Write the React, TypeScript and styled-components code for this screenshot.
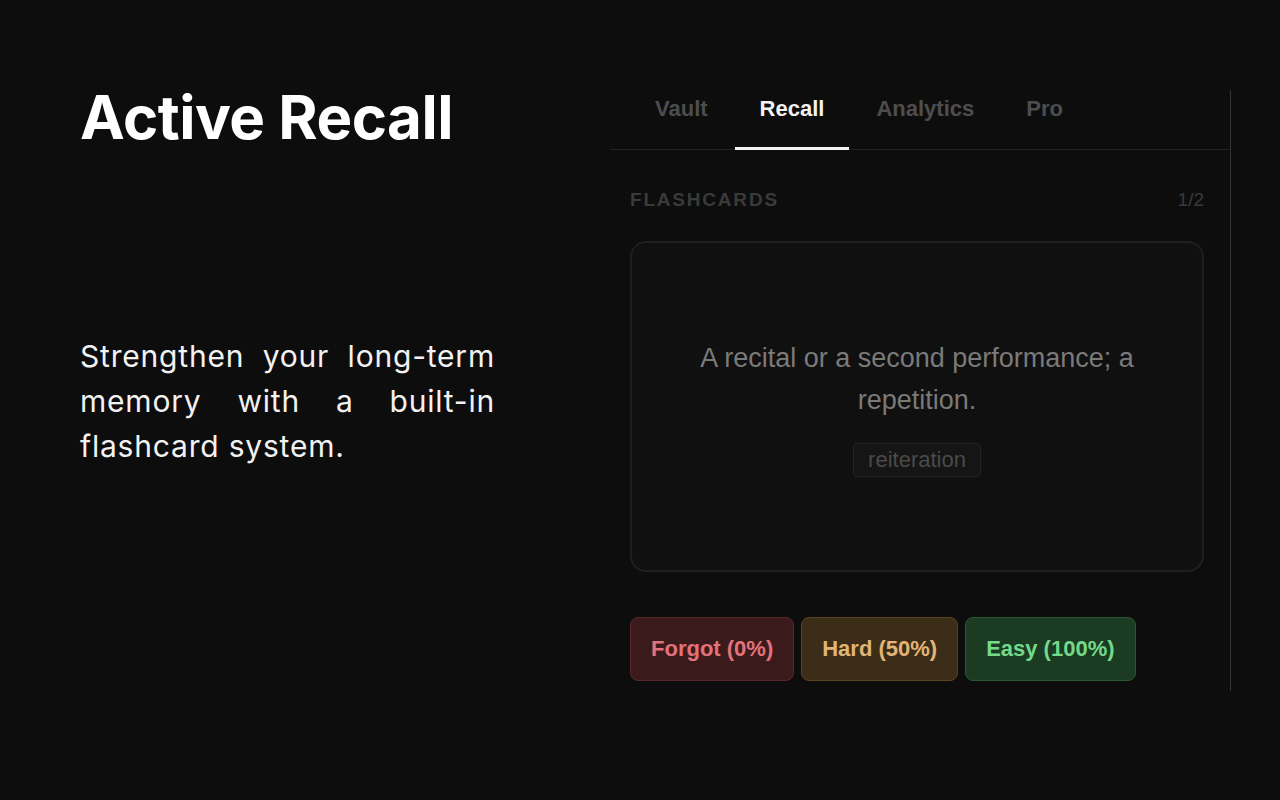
import styled, { createGlobalStyle } from "styled-components";

const GlobalStyle = createGlobalStyle`
  html, body {
    margin: 0;
    padding: 0;
    background: #0d0d0d;
  }
  * {
    box-sizing: border-box;
  }
`;

type Tone = "red" | "amber" | "green";

const tones: Record<Tone, { bg: string; border: string; text: string }> = {
  red: { bg: "#3b1a1c", border: "#55282b", text: "#e2727a" },
  amber: { bg: "#3b2d18", border: "#5a4424", text: "#e2b476" },
  green: { bg: "#1b3b23", border: "#2a5632", text: "#74d98a" },
};

const tabs = ["Vault", "Recall", "Analytics", "Pro"];

const grades: { label: string; tone: Tone }[] = [
  { label: "Forgot (0%)", tone: "red" },
  { label: "Hard (50%)", tone: "amber" },
  { label: "Easy (100%)", tone: "green" },
];

const App = () => {
  return (
    <>
      <GlobalStyle />
      <Page>
        <Intro>
          <Title>Active Recall</Title>
          <Lead>Strengthen your long-term memory with a built-in flashcard system.</Lead>
        </Intro>

        <Panel>
          <TabBar>
            {tabs.map((tab) => (
              <Tab key={tab} active={tab === "Recall"}>
                {tab}
              </Tab>
            ))}
          </TabBar>

          <Body>
            <SectionHeader>
              <SectionTitle>FLASHCARDS</SectionTitle>
              <Counter>1/2</Counter>
            </SectionHeader>

            <Card>
              <Definition>A recital or a second performance; a repetition.</Definition>
              <Answer>reiteration</Answer>
            </Card>

            <Grades>
              {grades.map((g) => (
                <GradeButton key={g.label} tone={g.tone}>
                  {g.label}
                </GradeButton>
              ))}
            </Grades>
          </Body>
        </Panel>
      </Page>
    </>
  );
};

const Page = styled.div`
  width: 1280px;
  height: 800px;
  display: flex;
  flex-direction: row;
  align-items: flex-start;
  padding: 81px 0 0 80px;
  gap: 115px;
  overflow: hidden;
`;

const Intro = styled.div`
  width: 415px;
  display: flex;
  flex-direction: column;
`;

const Title = styled.h1`
  margin: 0;
  font-family: Inter, "Noto Sans", sans-serif;
  font-weight: 700;
  font-size: 60px;
  line-height: 72px;
  letter-spacing: -0.5px;
  color: #ffffff;
`;

const Lead = styled.p`
  margin: 181px 0 0;
  font-family: Inter, "Noto Sans", sans-serif;
  font-weight: 400;
  font-size: 30px;
  line-height: 45px;
  letter-spacing: 0.8px;
  text-align: justify;
  color: #f2f2f2;
`;

const Panel = styled.div`
  margin-top: 9px;
  width: 621px;
  height: 601px;
  display: flex;
  flex-direction: column;
  border-right: 1px solid #353535;
  font-family: "Liberation Sans", Arial, sans-serif;
`;

const TabBar = styled.div`
  height: 60px;
  display: flex;
  flex-direction: row;
  gap: 2px;
  padding-left: 20px;
  border-bottom: 1px solid #222222;
`;

const Tab = styled.div<{ active: boolean }>`
  position: relative;
  padding: 6px 25px 0;
  font-size: 22px;
  font-weight: 700;
  line-height: 26px;
  color: ${({ active }) => (active ? "#f2f2f2" : "#4d4d4d")};

  &::after {
    content: "";
    display: ${({ active }) => (active ? "block" : "none")};
    position: absolute;
    left: 0;
    right: 0;
    bottom: -1px;
    height: 3px;
    background: #f2f2f2;
  }
`;

const Body = styled.div`
  display: flex;
  flex-direction: column;
  padding: 39px 26px 0 20px;
`;

const SectionHeader = styled.div`
  display: flex;
  flex-direction: row;
  justify-content: space-between;
  align-items: center;
  height: 22px;
`;

const SectionTitle = styled.div`
  font-size: 19px;
  font-weight: 700;
  letter-spacing: 1.8px;
  color: #3a3a3a;
`;

const Counter = styled.div`
  font-size: 19px;
  color: #3a3a3a;
`;

const Card = styled.div`
  margin-top: 30px;
  height: 331px;
  display: flex;
  flex-direction: column;
  align-items: center;
  justify-content: center;
  gap: 22px;
  padding: 0 40px;
  background: #101010;
  border: 2px solid #1f1f1f;
  border-radius: 16px;
`;

const Definition = styled.div`
  font-size: 27px;
  line-height: 42px;
  text-align: center;
  color: #7a7a7a;
`;

const Answer = styled.div`
  height: 34px;
  display: flex;
  align-items: center;
  padding: 0 14px;
  font-size: 22px;
  color: #4a4a4a;
  background: #151515;
  border: 1px solid #232323;
  border-radius: 4px;
`;

const Grades = styled.div`
  margin-top: 45px;
  display: flex;
  flex-direction: row;
  gap: 7px;
`;

const GradeButton = styled.div<{ tone: Tone }>`
  height: 64px;
  display: flex;
  align-items: center;
  padding: 0 20px;
  font-size: 22px;
  font-weight: 700;
  color: ${({ tone }) => tones[tone].text};
  background: ${({ tone }) => tones[tone].bg};
  border: 1px solid ${({ tone }) => tones[tone].border};
  border-radius: 8px;
`;

export default App;
